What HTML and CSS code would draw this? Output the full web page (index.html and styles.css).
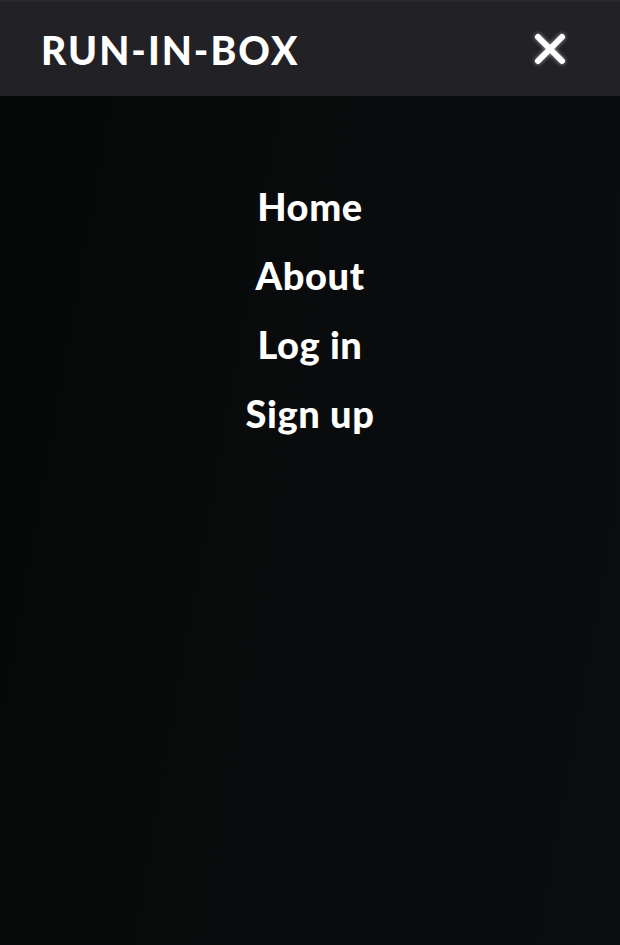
FILE: index.html
```html
<!DOCTYPE html>
<html lang="en">
<head>
<meta charset="utf-8">
<title>RUN-IN-BOX</title>
<link rel="stylesheet" href="styles.css">
</head>
<body>
<div class="page">
  <header class="topbar">
    <a class="brand" href="#">RUN-IN-BOX</a>
    <button class="close" aria-label="Close menu">
      <svg width="34" height="34" viewBox="0 0 34 34" aria-hidden="true">
        <path d="M5 5 L29 29 M29 5 L5 29" stroke="#fff" stroke-width="6" stroke-linecap="round" fill="none"/>
      </svg>
    </button>
  </header>
  <nav class="menu">
    <a href="#" class="menu-link">Home</a>
    <a href="#" class="menu-link">About</a>
    <a href="#" class="menu-link">Log in</a>
    <a href="#" class="menu-link">Sign up</a>
  </nav>
</div>
</body>
</html>
```

FILE: styles.css
```css
html, body {
  margin: 0;
  padding: 0;
  height: 100%;
}
body {
  background: #08090a;
  font-family: Lato, "Open Sans", sans-serif;
}
.page {
  display: flex;
  flex-direction: column;
  min-height: 100%;
  background: linear-gradient(100deg, #060707 0%, #0a0b0c 50%, #0b0c0e 100%);
}
.topbar {
  height: 94px;
  border-top: 2px solid #2a2a2c;
  background: #222226;
  display: flex;
  align-items: center;
  justify-content: space-between;
  padding: 0 53px 0 41px;
}
.brand {
  color: #fff;
  text-decoration: none;
  font-weight: 900;
  font-size: 39px;
  letter-spacing: 2px;
  margin-top: 2px;
}
.close {
  background: none;
  border: 0;
  padding: 0;
  width: 34px;
  height: 34px;
  display: flex;
  filter: drop-shadow(0 0 2px rgba(255,255,255,0.6));
}
.menu {
  display: flex;
  flex-direction: column;
  align-items: center;
  gap: 19px;
  padding-top: 85px;
}
.menu-link {
  color: #fff;
  text-decoration: none;
  font-weight: 900;
  font-size: 38px;
  letter-spacing: 0.6px;
  line-height: 50px;
}
```
